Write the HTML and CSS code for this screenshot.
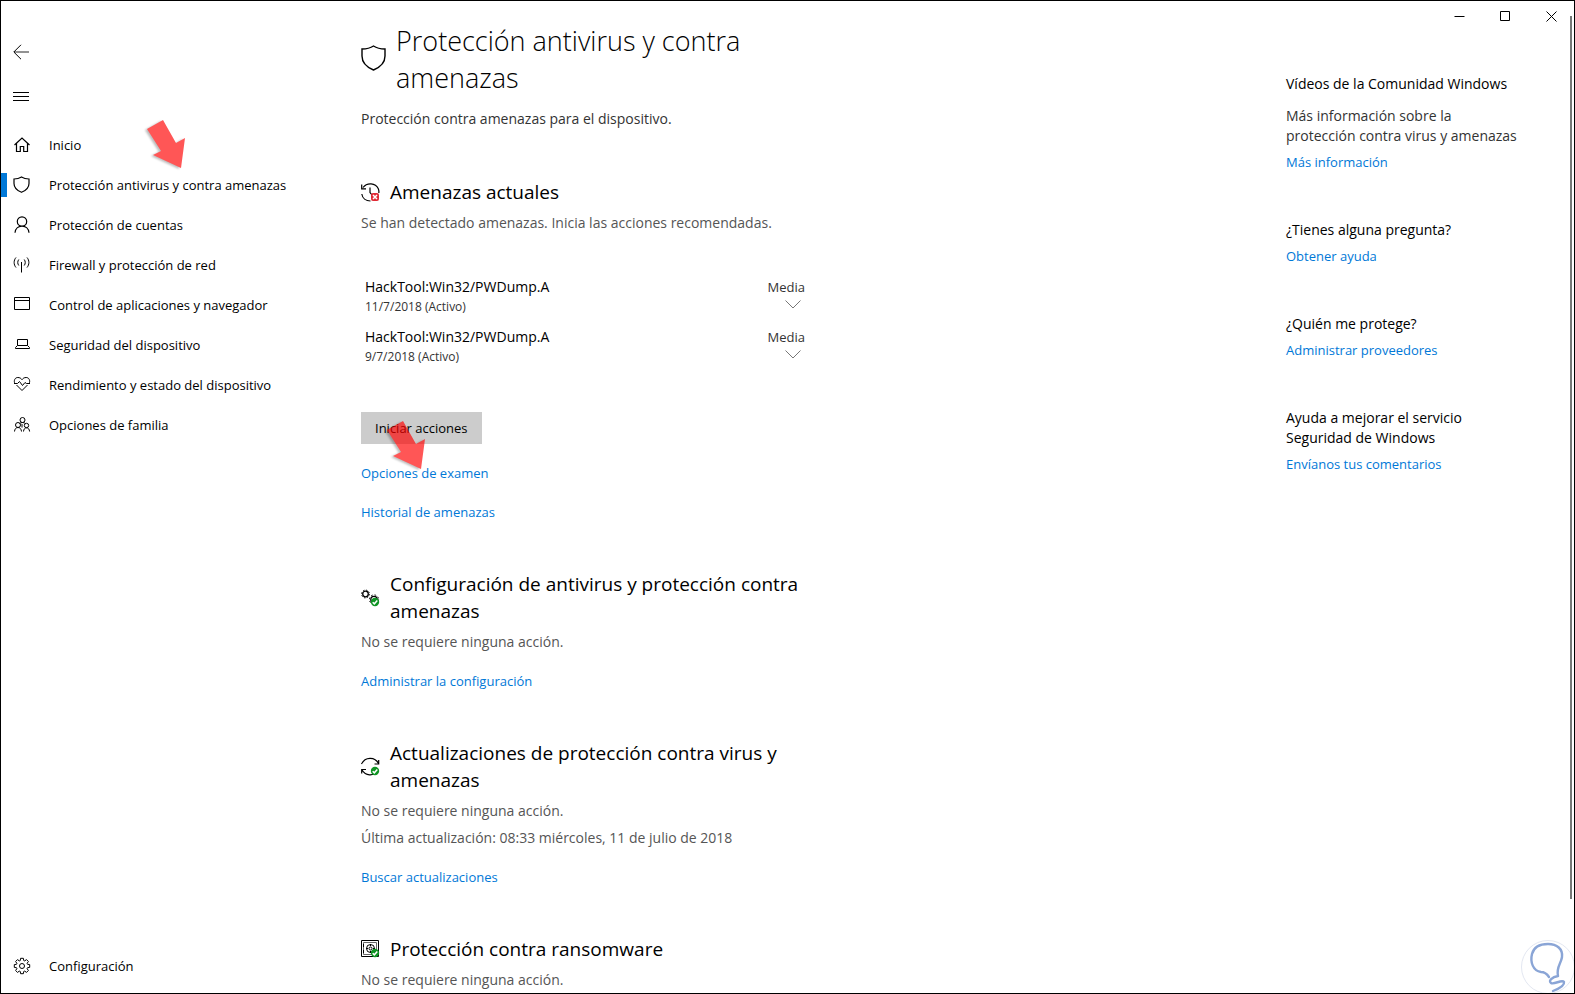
FILE: index.html
```html
<!DOCTYPE html>
<html lang="es">
<head>
    <meta charset="UTF-8">
    <meta name="viewport" content="width=device-width, initial-scale=1.0">
    <title>Seguridad de Windows</title>
    <link rel="stylesheet" href="styles.css">
</head>
<body>
    <div class="window">

        <!-- Window controls -->
        <div class="window-controls">
            <button class="control-btn" aria-label="Minimizar">
                <svg width="11" height="11" viewBox="0 0 11 11"><path d="M0.5 5.5h10"/></svg>
            </button>
            <button class="control-btn" aria-label="Maximizar">
                <svg width="11" height="11" viewBox="0 0 11 11"><path d="M0.5 0.5h9v9h-9z"/></svg>
            </button>
            <button class="control-btn" aria-label="Cerrar">
                <svg width="11" height="11" viewBox="0 0 11 11"><path d="M0.5 0.5l10 10M10.5 0.5l-10 10"/></svg>
            </button>
        </div>
        <div class="scroll-thumb"></div>

        <!-- Sidebar -->
        <nav class="sidebar">
            <button class="icon-btn back-btn" aria-label="Atrás">
                <svg width="16" height="16" viewBox="0 0 16 16"><path stroke="#777" stroke-width="1.6" d="M1 8h15"/><path d="M8 0.8L0.8 8L8 15.2"/></svg>
            </button>
            <button class="icon-btn menu-btn" aria-label="Menú">
                <svg width="16" height="16" viewBox="0 0 16 16"><path d="M0 3.5h16M0 7.5h16M0 11.5h16"/></svg>
            </button>

            <a href="#" class="nav-link">
                <svg width="18" height="18" viewBox="0 0 18 18"><path stroke-width="1.2" d="M1.5 9L9 2l7.5 7M3.5 7.5v8h3.8v-5h3.4v5h3.8v-8"/></svg>
                Inicio
            </a>
            <a href="#" class="nav-link active">
                <svg width="18" height="18" viewBox="0 0 18 18"><path stroke-width="1.2" d="M8.5 1C6.5 2.3 3.5 3 1 3v4.5c0 4 3.5 7.2 7.5 8.8c4-1.6 7.500-4.800 7.500-8.800V3C13.5 3 10.5 2.3 8.5 1z"/></svg>
                Protección antivirus y contra amenazas
            </a>
            <a href="#" class="nav-link">
                <svg width="18" height="18" viewBox="0 0 18 18"><path stroke-width="1.2" d="M9 0.8a4.700 4.700 0 1 1 0 9.400a4.700 4.700 0 1 1 0-9.400M2 16.8c0.300-4 3.200-6.600 7-6.600s6.700 2.600 7 6.600"/></svg>
                Protección de cuentas
            </a>
            <a href="#" class="nav-link">
                <svg width="18" height="18" viewBox="0 0 18 18"><path d="M8.5 6v10.5M5.8 3.5c-1.400 1.700-1.400 4.300 0 6M11.200 3.500c1.400 1.700 1.400 4.300 0 6M3 1.500c-2.500 2.900-2.500 7.100 0 10M14 1.500c2.500 2.900 2.500 7.100 0 10"/></svg>
                Firewall y protección de red
            </a>
            <a href="#" class="nav-link">
                <svg width="18" height="18" viewBox="0 0 18 18"><path d="M1.5 1.5h15v12h-15zM1.5 4.5h15"/></svg>
                Control de aplicaciones y navegador
            </a>
            <a href="#" class="nav-link">
                <svg width="18" height="18" viewBox="0 0 18 18"><path d="M4.5 3.5h10v6h-10zM4.5 9.5l-2 2v1h14v-1l-2-2"/></svg>
                Seguridad del dispositivo
            </a>
            <a href="#" class="nav-link">
                <svg width="18" height="18" viewBox="0 0 18 18"><path d="M1.8 7.5C0.5 4.5 2 1.5 4.8 1.5c2 0 3.200 0.800 4.200 2.200c1-1.400 2.200-2.200 4.200-2.200c2.800 0 4.300 3 3 6M3.500 9L9 14.500L14.500 9M1 7.500h3.500l2-2l3 4l2.500-3l1.500 1H17"/></svg>
                Rendimiento y estado del dispositivo
            </a>
            <a href="#" class="nav-link">
                <svg width="18" height="18" viewBox="0 0 18 18"><circle cx="9.5" cy="4" r="2.5"/><circle cx="5" cy="9" r="2.5"/><circle cx="13.5" cy="9.5" r="2.2"/><path d="M1.5 15.5c0.200-2.500 1.500-4 3.500-4s3.300 1.500 3.500 4M10.500 15.500c0.200-2.300 1.300-3.700 3-3.700s2.900 1.400 3.100 3.700M6.500 7.500c1.500-1.300 4.500-1.300 6 0M9 8v3.500"/></svg>
                Opciones de familia
            </a>

            <a href="#" class="nav-link settings-link">
                <svg width="18" height="18" viewBox="0 0 18 18"><circle cx="9" cy="9" r="2.5"/><path d="M7.6 1.3h2.800l0.300 2.200l1 0.400l1.800-1.300l1.900 1.900l-1.300 1.800l0.400 1l2.200 0.300v2.800l-2.200 0.300l-0.400 1l1.300 1.800l-1.900 1.900l-1.800-1.300l-1 0.400l-0.300 2.200H7.600l-0.300-2.200l-1-0.400l-1.800 1.300l-1.900-1.900l1.300-1.800l-0.400-1l-2.200-0.300V7.600l2.200-0.300l0.400-1l-1.300-1.800l1.900-1.900l1.800 1.300l1-0.400z"/></svg>
                Configuración
            </a>
        </nav>

        <!-- Main content -->
        <main class="content">
            <header class="page-header">
                <svg class="page-icon" width="26" height="28" viewBox="0 0 26 28"><path stroke-width="1.4" d="M12.5 1C9.5 3 5 4 1 4v7c0 6.500 5.500 11.500 11.500 14c6-2.500 11.500-7.500 11.500-14V4C20 4 15.500 3 12.500 1z"/></svg>
                <h1>Protección antivirus y contra amenazas</h1>
            </header>
            <p class="intro">Protección contra amenazas para el dispositivo.</p>

            <section class="section">
                <div class="section-header">
                    <svg width="20" height="20" viewBox="0 0 20 20"><path stroke-width="1.2" d="M2 4.500C6-0.800 14.500-0.300 17.200 5.500c0.600 1.400 0.900 3 0.600 4.500M0.800 11c0.600 4 4 7 8.700 7M9 4.500v5l2 2.500M0.700 1.500v4.300h4.300"/><rect x="10" y="10" width="8" height="8" rx="2" class="badge-bad"/><path class="badge-mark" d="M12 12l4 4M16 12l-4 4"/></svg>
                    <h2>Amenazas actuales</h2>
                </div>
                <p class="status">Se han detectado amenazas. Inicia las acciones recomendadas.</p>

                <ul class="threats">
                    <li class="threat">
                        <div>
                            <div class="threat-name">HackTool:Win32/PWDump.A</div>
                            <div class="threat-date">11/7/2018 (Activo)</div>
                        </div>
                        <div class="threat-level">
                            Media
                            <svg width="16" height="9" viewBox="0 0 16 9"><path d="M0.5 0.5L8 8L15.5 0.5"/></svg>
                        </div>
                    </li>
                    <li class="threat">
                        <div>
                            <div class="threat-name">HackTool:Win32/PWDump.A</div>
                            <div class="threat-date">9/7/2018 (Activo)</div>
                        </div>
                        <div class="threat-level">
                            Media
                            <svg width="16" height="9" viewBox="0 0 16 9"><path d="M0.5 0.5L8 8L15.5 0.5"/></svg>
                        </div>
                    </li>
                </ul>

                <button class="action-btn">Iniciar acciones</button>
                <a href="#" class="link">Opciones de examen</a>
                <a href="#" class="link">Historial de amenazas</a>
            </section>

            <section class="section">
                <div class="section-header">
                    <svg width="20" height="20" viewBox="0 0 20 20"><circle cx="4.500" cy="6" r="2.800" stroke-width="1.300"/><circle cx="4.500" cy="6" r="3.900" stroke-dasharray="1.500 1.560"/><circle cx="13" cy="11.500" r="3.200" stroke-width="1.300"/><circle cx="13" cy="11.500" r="4.600" stroke-dasharray="1.700 1.910"/><circle cx="14" cy="14" r="4.200" class="badge-ok"/><path class="badge-mark" d="M11.700 14.200l1.600 1.600l3-3.300"/></svg>
                    <h2>Configuración de antivirus y protección contra amenazas</h2>
                </div>
                <p class="status">No se requiere ninguna acción.</p>
                <a href="#" class="link">Administrar la configuración</a>
            </section>

            <section class="section">
                <div class="section-header">
                    <svg width="20" height="20" viewBox="0 0 20 20"><path stroke-width="1.2" d="M0.500 7C4-0.500 14-0.500 17.500 6.500M17.700 3v4h-4.200M16.500 14c-4 5.500-12 5-15.500-1M0.700 16.500v-4h4.300"/><circle cx="14" cy="14" r="4.200" class="badge-ok"/><path class="badge-mark" d="M11.700 14.200l1.600 1.600l3-3.300"/></svg>
                    <h2>Actualizaciones de protección contra virus y amenazas</h2>
                </div>
                <p class="status">No se requiere ninguna acción.</p>
                <p class="status">Última actualización: 08:33 miércoles, 11 de julio de 2018</p>
                <a href="#" class="link">Buscar actualizaciones</a>
            </section>

            <section class="section">
                <div class="section-header">
                    <svg width="20" height="20" viewBox="0 0 20 20"><path d="M0.500 0.500h17v16h-17z"/><path stroke="#666" d="M2.500 2.500h13v12h-13z"/><circle cx="9.500" cy="8.500" r="4"/><circle cx="9.500" cy="8.500" r="1.500"/><path d="M9.500 4v2M9.500 11v2M5 8.500h2M12 8.500h2M2.500 4v3M2.500 10v3"/><circle cx="14" cy="13" r="4.200" class="badge-ok"/><path class="badge-mark" d="M11.700 13.200l1.600 1.600l3-3.300"/></svg>
                    <h2>Protección contra ransomware</h2>
                </div>
                <p class="status">No se requiere ninguna acción.</p>
            </section>
        </main>

        <!-- Help links -->
        <aside class="help">
            <div class="help-block">
                <h3>Vídeos de la Comunidad Windows</h3>
                <p>Más información sobre la protección contra virus y amenazas</p>
                <a href="#" class="link">Más información</a>
            </div>
            <div class="help-block">
                <h3>¿Tienes alguna pregunta?</h3>
                <a href="#" class="link">Obtener ayuda</a>
            </div>
            <div class="help-block">
                <h3>¿Quién me protege?</h3>
                <a href="#" class="link">Administrar proveedores</a>
            </div>
            <div class="help-block">
                <h3>Ayuda a mejorar el servicio Seguridad de Windows</h3>
                <a href="#" class="link">Envíanos tus comentarios</a>
            </div>
        </aside>

        <!-- Pointer arrows -->
        <svg class="pointer pointer-nav" width="48" height="56" viewBox="0 0 48 56"><path d="M5 11L21 2L34 25L43 20L39 50L11 37L19 33z"/></svg>
        <svg class="pointer pointer-scan" width="48" height="56" viewBox="0 0 48 56"><path d="M5 11L21 2L34 25L43 20L39 50L11 37L19 33z"/></svg>

        <!-- Watermark -->
        <svg class="watermark" width="54" height="54" viewBox="0 0 54 54">
            <circle cx="27" cy="27" r="26.5" fill="#fff" stroke="#e3e7f1"/>
            <path fill="none" stroke="#8aa5d6" stroke-width="2.4" stroke-linecap="round" stroke-linejoin="round" d="M28 37C26 34 24 32 20 32C12 31 9 22 11 14C13 6 21 4 27 4C36 4 42 9 41 17C40 24 35 27 37 36C31 37 27 41 30 43C33 45 41 39 43 42C44 46 37 49 32 51"/>
        </svg>
    </div>
</body>
</html>
```
FILE: styles.css
```css
/* Global Styles */
* {
    box-sizing: border-box;
}

body {
    margin: 0;
    font-family: "Open Sans", "Noto Sans", sans-serif;
    font-size: 13px;
    line-height: 20px;
    color: #000;
    background: #fff;
}

h1, h2, h3, p, ul {
    margin: 0;
    padding: 0;
    font-weight: 400;
}

a {
    text-decoration: none;
}

button {
    border: none;
    padding: 0;
    background: none;
    font: inherit;
    cursor: pointer;
}

svg {
    flex: none;
    fill: none;
    stroke: #000;
}

/* Window */
.window {
    position: relative;
    display: grid;
    grid-template-columns: 360px 1fr 288px;
    height: 100vh;
    border: 1px solid #000;
    overflow: hidden;
}

.window-controls {
    position: absolute;
    top: 0;
    right: 0;
    display: flex;
}

.control-btn {
    display: flex;
    align-items: center;
    justify-content: center;
    width: 46px;
    height: 30px;
}

.scroll-thumb {
    position: absolute;
    top: 15px;
    right: 2px;
    width: 2px;
    height: 89%;
    background: #777;
}

/* Sidebar */
.sidebar {
    display: flex;
    flex-direction: column;
    height: calc(100vh - 2px);
    padding: 28px 0 7px;
}

.icon-btn {
    display: flex;
    align-items: center;
    width: 48px;
    height: 45px;
    padding-left: 12px;
}

.menu-btn {
    margin-bottom: 6px;
}

.nav-link {
    display: flex;
    align-items: center;
    gap: 18px;
    height: 40px;
    padding-left: 12px;
    color: #000;
}

.nav-link.active {
    background: linear-gradient(#0078d7, #0078d7) left center / 6px 24px no-repeat;
}

.settings-link {
    margin-top: auto;
}

/* Main Content */
.content {
    width: 448px;
    padding-top: 21px;
}

.page-header {
    display: flex;
    align-items: center;
    gap: 9px;
}

h1 {
    font-size: 27px;
    font-weight: 300;
    line-height: 37px;
}

.intro {
    margin: 13px 0 50px;
    font-size: 14px;
    color: #333;
}

.section {
    margin-bottom: 49px;
}

.section-header {
    display: flex;
    align-items: center;
    gap: 9px;
}

h2 {
    font-size: 19px;
    line-height: 27px;
}

.status {
    margin-top: 7px;
    font-size: 14px;
    color: #555;
}

.link {
    display: block;
    margin-top: 19px;
    color: #0078d7;
}

/* Threat List */
.threats {
    display: grid;
    gap: 10px;
    margin: 44px 0 45px;
    list-style: none;
}

.threat {
    display: flex;
    justify-content: space-between;
    padding: 0 4px;
}

.threat-name {
    font-size: 14px;
}

.threat-date {
    font-size: 12px;
    color: #333;
}

.threat-level {
    display: flex;
    flex-direction: column;
    align-items: flex-end;
    gap: 3px;
    color: #333;
}

.threat-level svg {
    margin-right: 4px;
    stroke: #777;
}

.action-btn {
    height: 32px;
    padding: 0 14px;
    background: #ccc;
}

/* Help */
.help {
    width: 236px;
    padding-top: 73px;
    font-size: 14px;
}

.help-block {
    margin-bottom: 48px;
}

.help h3 {
    font-size: 14px;
}

.help p {
    margin-top: 12px;
    color: #333;
}

.help .link {
    margin-top: 6px;
    font-size: 13px;
}

/* Icon Badges */
.badge-bad {
    fill: #e02b35;
    stroke: none;
}

.badge-ok {
    fill: #0f9424;
    stroke: none;
}

.badge-mark {
    stroke: #fff;
    stroke-width: 1.5;
}

/* Pointer Arrows */
.pointer {
    position: absolute;
    fill: #ff0000;
    stroke: none;
    opacity: 0.66;
    filter: drop-shadow(-2px 1px 1px rgba(0, 0, 0, 0.4));
}

.pointer-nav {
    left: 141px;
    top: 117px;
}

.pointer-scan {
    left: 381px;
    top: 418px;
}

/* Watermark */
.watermark {
    position: absolute;
    right: -1px;
    bottom: -1px;
}
```
